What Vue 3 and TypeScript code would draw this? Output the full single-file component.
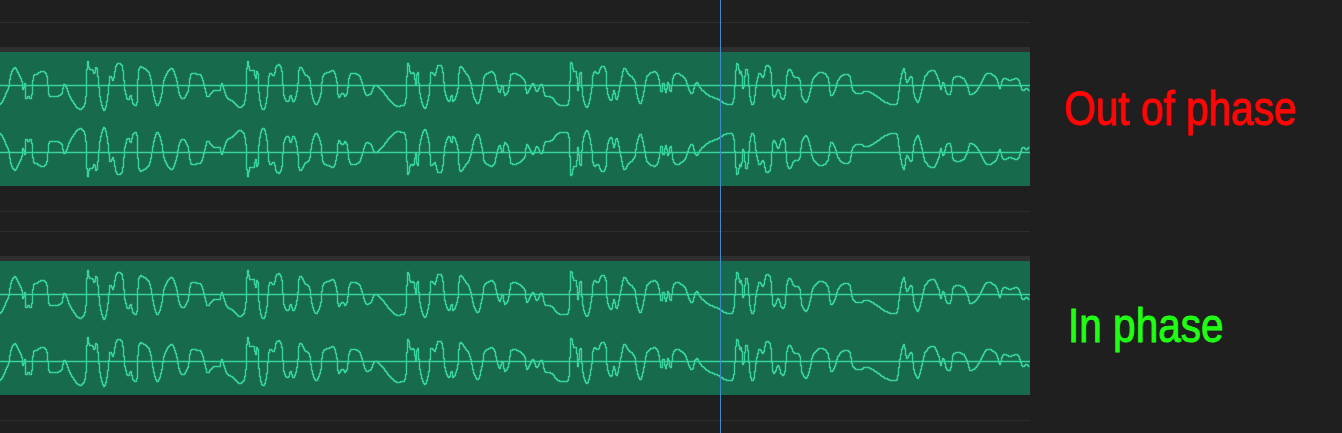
<script setup lang="ts">
type Pt = [number, number]

// waveform traced from the reference, x and y in crop pixels (3x)
const traces: { from: number; to: number; mid: number; pts: Pt[] }[] = [
  {
    from: 0, to: 340, mid: 256,
    pts: [[0,313],[10,300],[20,275],[28,255],[32,225],[45,203],[55,220],[65,240],[70,270],[75,250],[78,295],[85,288],[95,292],[100,232],[112,222],[128,214],[142,232],[146,280],[155,288],[185,282],[192,254],[200,262],[210,290],[235,325],[250,320],[258,290],[262,188],[268,205],[278,210],[283,222],[290,200],[295,240],[300,290],[312,330],[322,300],[330,230],[340,240],[348,200],[358,190],[368,205],[375,270],[385,300],[392,285],[400,312],[412,300],[415,215],[432,205],[450,225],[460,280],[472,316],[485,285],[492,240],[515,205],[530,240],[538,280],[550,295],[565,270],[572,225],[590,222],[605,230],[615,265],[622,290],[640,272],[660,270],[665,250],[680,290],[700,305],[715,320],[730,315],[738,280],[742,188],[750,210],[762,212],[768,235],[773,208],[778,290],[790,328],[800,300],[808,225],[822,225],[830,198],[845,208],[852,285],[865,305],[872,285],[880,305],[892,270],[898,205],[915,222],[930,240],[935,280],[948,313],[962,285],[968,232],[990,215],[1000,212],[1010,240],[1015,290]],
  },
  {
    from: 340, to: 680, mid: 136,
    pts: [[0,168],[8,158],[15,168],[22,155],[28,110],[42,100],[60,110],[70,140],[78,163],[92,160],[105,135],[125,150],[145,175],[165,195],[185,196],[198,175],[203,72],[212,100],[222,100],[228,132],[233,92],[240,160],[255,205],[268,160],[272,100],[285,105],[295,76],[308,90],[315,155],[328,185],[335,165],[340,185],[355,140],[358,85],[375,95],[392,125],[400,165],[415,190],[428,140],[432,112],[455,95],[465,105],[470,130],[480,158],[487,135],[495,165],[508,140],[512,105],[540,107],[555,125],[560,160],[580,130],[590,155],[605,132],[615,165],[635,172],[655,193],[675,195],[688,175],[692,72],[702,95],[710,100],[714,150],[722,92],[728,165],[742,202],[755,150],[760,100],[775,100],[785,80],[798,95],[802,155],[815,180],[822,150],[830,180],[842,130],[852,86],[865,100],[885,125],[890,160],[902,190],[915,140],[920,110],[945,95],[955,110],[965,158],[970,125],[978,158],[985,125],[992,158],[1000,110],[1012,100],[1030,108]],
  },
  {
    from: 680, to: 1030, mid: 136,
    pts: [[0,103],[15,115],[28,150],[38,160],[45,132],[55,130],[60,143],[85,165],[115,178],[135,190],[150,193],[162,175],[170,72],[180,100],[185,97],[190,150],[197,92],[203,95],[210,170],[220,193],[230,130],[238,100],[250,110],[258,80],[272,90],[278,160],[285,170],[295,148],[305,175],[315,165],[322,100],[332,90],[340,108],[360,120],[365,165],[380,185],[392,150],[398,120],[420,97],[445,115],[452,165],[465,150],[475,120],[490,105],[510,110],[518,150],[540,160],[560,153],[585,165],[620,188],[652,188],[660,130],[672,85],[680,125],[695,110],[702,160],[715,185],[730,130],[735,110],[760,90],[778,125],[782,150],[790,125],[800,160],[812,158],[820,115],[850,115],[862,135],[870,163],[895,145],[920,102],[950,115],[960,145],[968,118],[990,120],[1015,118],[1028,150],[1040,145],[1050,152]],
  },
]

const wave: Pt[] = traces.flatMap((t) =>
  t.pts
    .map(([x, y]): Pt => [t.from + x / 3, (y - t.mid) / 3])
    .filter(([x]) => x <= t.to)
)

// hermite between traced points so the lobes come out round
const slope = (i: number) => {
  const a = wave[Math.max(i - 1, 0)]
  const b = wave[Math.min(i + 1, wave.length - 1)]
  return (b[1] - a[1]) / (b[0] - a[0] || 1)
}

const offsetAt = (x: number) => {
  let i = 1
  while (i < wave.length - 1 && wave[i][0] < x) i++
  const [x0, y0] = wave[i - 1]
  const [x1, y1] = wave[i]
  const h = x1 - x0 || 1
  const t = (x - x0) / h
  const lo = Math.min(y0, y1) - 2
  const hi = Math.max(y0, y1) + 2
  const y =
    (2 * t ** 3 - 3 * t ** 2 + 1) * y0 +
    (t ** 3 - 2 * t ** 2 + t) * h * slope(i - 1) +
    (-2 * t ** 3 + 3 * t ** 2) * y1 +
    (t ** 3 - t ** 2) * h * slope(i)
  return Math.min(hi, Math.max(lo, y))
}

// stepped like the DAW draws it, one pixel column at a time
const stepPath = (mid: number, sign: number) => {
  let d = `M0 ${Math.round(mid + sign * offsetAt(0)) + 0.5}`
  for (let x = 1; x <= 1030; x++) {
    d += `H${x - 0.5}V${Math.round(mid + sign * offsetAt(x)) + 0.5}`
  }
  return d
}

const tracks = [
  { id: "out", label: "Out of phase", lower: -1 },
  { id: "in", label: "In phase", lower: 1 },
].map((t) => ({ ...t, upperPath: stepPath(33, 1), lowerPath: stepPath(100, t.lower) }))
</script>

<template>
  <div class="page">
    <div v-for="t in tracks" :key="t.id" class="row" :class="t.id">
      <div class="track">
        <div class="region">
          <div class="region-head"></div>
          <svg class="wave" width="1030" height="134" viewBox="0 0 1030 134">
            <line x1="0" x2="1030" y1="33.5" y2="33.5" />
            <line x1="0" x2="1030" y1="100.5" y2="100.5" />
            <path :d="t.upperPath" />
            <path :d="t.lowerPath" />
          </svg>
        </div>
      </div>
      <div class="label">{{ t.label }}</div>
    </div>
    <div class="playhead"></div>
  </div>
</template>

<style>
html,
body {
  background: #1f1f1f;
  overflow: hidden;
}
</style>

<style scoped>
.page {
  position: relative;
  height: 433px;
  padding-top: 22px;
  box-sizing: border-box;
  background: #1f1f1f;
  overflow: hidden;
}
.row {
  display: flex;
  margin-bottom: 19px;
}
.track {
  flex: none;
  width: 1030px;
  box-sizing: border-box;
  border-top: 1px solid #2e2e2e;
  border-bottom: 1px solid #2e2e2e;
  padding: 24px 0 25px;
}
.region-head {
  height: 5px;
  background: #2f2f2f;
}
.wave {
  display: block;
  background: #176a4c;
  fill: none;
  stroke: #39d39d;
  stroke-width: 1.4;
  stroke-linejoin: round;
}
.label {
  font-family: "Liberation Sans", Arial, sans-serif;
  font-size: 48px;
  line-height: 56px;
  white-space: nowrap;
  transform: scaleX(0.845);
  transform-origin: left top;
  -webkit-text-stroke: 0.9px currentColor;
}
.out .label {
  color: #ff0505;
  margin: 59px 0 0 34px;
}
.in .label {
  color: #20ff14;
  margin: 67px 0 0 38px;
}
.playhead {
  position: absolute;
  top: 0;
  bottom: 0;
  left: 720px;
  width: 1px;
  background: #3f8ac8;
}
</style>
